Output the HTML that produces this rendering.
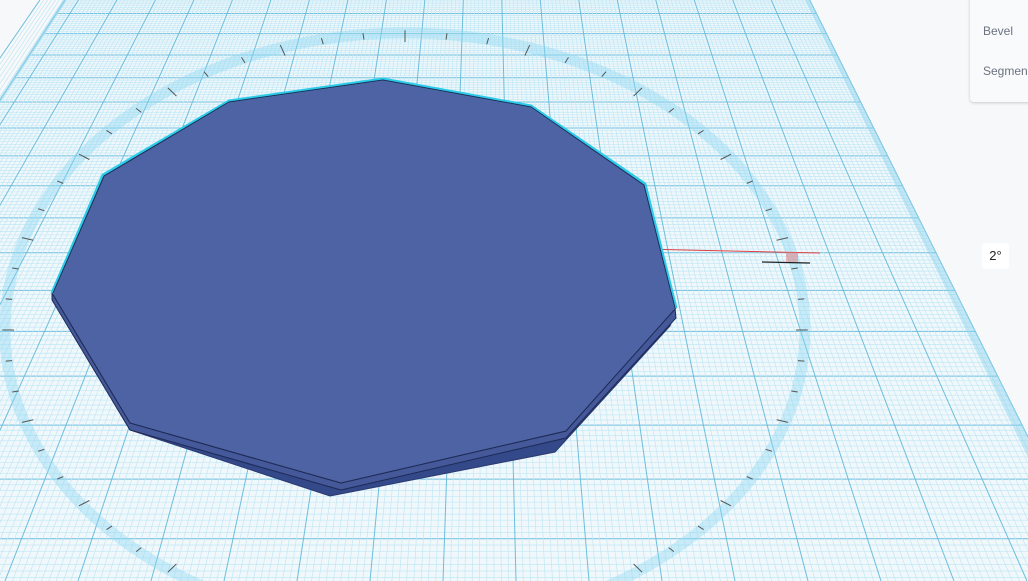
<!DOCTYPE html>
<html><head><meta charset="utf-8">
<style>
html,body{margin:0;padding:0;width:1028px;height:581px;overflow:hidden;background:#f7f8f9;font-family:"Liberation Sans",sans-serif}
svg{position:absolute;left:0;top:0}
.panel{position:absolute;left:970px;top:-4px;width:70px;height:106px;background:#f9fafb;border-radius:4px;box-shadow:0 1px 3px rgba(0,0,0,0.18)}
.panel div{position:absolute;left:13px;font-size:12px;color:#6b7280}
.deg{position:absolute;left:982px;top:243px;width:27px;height:26px;background:#fff;border-radius:3px;font-size:13px;color:#222;text-align:center;line-height:26px}
</style></head><body>
<svg id="s" width="1028" height="581" viewBox="0 0 1028 581">
<g id="grid"></g>
<ellipse cx="405" cy="330" rx="400" ry="297" fill="none" stroke="rgba(140,215,242,0.4)" stroke-width="11"/>
<g id="ticks" stroke="#555" stroke-width="1"></g>
<line x1="365" y1="243" x2="820" y2="253" stroke="#e04040" stroke-width="1"/>
<line x1="762" y1="262" x2="810" y2="263" stroke="#222" stroke-width="1.2"/>
<rect x="786" y="252" width="12" height="10" fill="rgba(230,120,120,0.5)"/>
<polygon points="52,298 130,430 330,496 555,452 670,326 675,312 566,437 341,490 130,428" fill="#34498a" stroke="#2a3a70" stroke-width="1"/>
<polygon points="52,293 130,423 341,483 566,431 675,308 676,318 566,438 341,490 130,430 52,300" fill="#45599a" stroke="#1e2a55" stroke-width="1"/>
<polygon points="52,293 103,175 229,101 383,79 531,106 645,184 676,308 566,431 341,483 130,423" fill="#4e63a4" stroke="#1e2a55" stroke-width="1"/>
<polyline points="52,293 103,175 229,101 383,79 531,106 645,184 676,308" fill="none" stroke="#2ccbe9" stroke-width="3" stroke-linejoin="round"/>
<polyline points="53,293 104,176 229,102 383,80 531,107 644,185 675,308" fill="none" stroke="#1e2a55" stroke-width="1"/>
</svg>
<div class="panel"><div style="top:28px">Bevel</div><div style="top:68px">Segmen</div></div>
<div class="deg">2°</div>
<script>
var NS="http://www.w3.org/2000/svg",g=document.getElementById('grid');
function L(x1,y1,x2,y2,c,w){var l=document.createElementNS(NS,'line');l.setAttribute('x1',x1);l.setAttribute('y1',y1);l.setAttribute('x2',x2);l.setAttribute('y2',y2);l.setAttribute('stroke',c);l.setAttribute('stroke-width',w);g.appendChild(l);}
var vx=486,vy=-648;
function lx(y){return vx+(65-vx)*(y-vy)/648;}
function rx(y){return vx+(810-vx)*(y-vy)/648;}
var p=document.createElementNS(NS,'polygon');
p.setAttribute('points',[lx(0),0,rx(0),0,rx(700),700,lx(700),700].join(' '));
p.setAttribute('fill','#f1f8fb');g.appendChild(p);
var st=4.46e-5,wM=1/776;
for(var k=-300;k<=200;k++){var w=wM+k*st/10;if(w<=0)continue;var y=1/w+vy;if(y<0||y>600)continue;
 var maj=(k%10==0);L(lx(y),y,rx(y),y,maj?'#6cbedd':'#c2e7f5',maj?1:0.7);}
for(var k=0;k<=200;k++){var xb=1100-k*7.3;var maj=(k%10==0);
 var x0=vx+(xb-vx)*(0-vy)/1229;L(x0,0,xb,581,maj?'#6cbedd':'#c2e7f5',maj?1:0.7);}
var e=document.createElementNS(NS,'polygon');
e.setAttribute('points',[rx(0)-5,0,rx(0),0,rx(700),700,rx(700)-14,700].join(' '));
e.setAttribute('fill','rgba(140,210,238,0.45)');g.appendChild(e);
L(lx(0),0,lx(700),700,'#8fd0ea',2);
var t=document.getElementById('ticks');
for(var a=0;a<360;a+=6){var r=a*Math.PI/180,cx=405+400*Math.cos(r),cy=330+297*Math.sin(r);
 if(cy>581)continue;var len=(a%18==0)?9:5;var nx=Math.cos(r),ny=Math.sin(r)*0.7;var n=Math.hypot(nx,ny);nx/=n;ny/=n;
 var l=document.createElementNS(NS,'line');l.setAttribute('x1',cx-nx*len);l.setAttribute('y1',cy-ny*len);l.setAttribute('x2',cx+nx*len*0.3);l.setAttribute('y2',cy+ny*len*0.3);t.appendChild(l);}
</script>
</body></html>
